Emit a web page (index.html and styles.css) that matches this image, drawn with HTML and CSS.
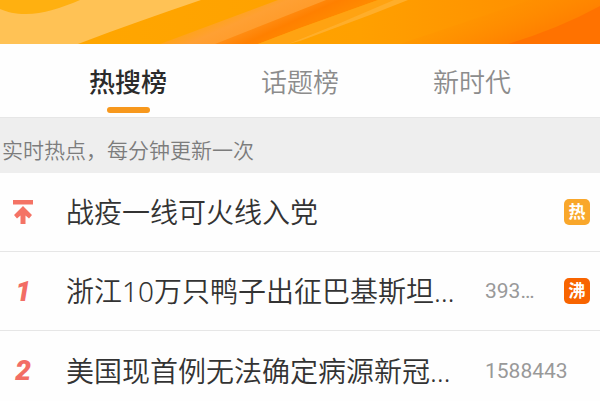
FILE: index.html
```html
<!DOCTYPE html>
<html lang="zh-CN">

<head>
    <meta charset="UTF-8">
    <meta name="viewport" content="width=device-width, initial-scale=1.0">
    <title>热搜榜</title>
    <link rel="stylesheet" href="styles.css">
</head>

<body>
    <header class="banner">
        <svg class="banner-art" viewBox="0 0 600 44" preserveAspectRatio="none" aria-hidden="true">
            <defs>
                <linearGradient id="base" x1="0" y1="0" x2="1" y2="0">
                    <stop offset="0" stop-color="#ffa800" />
                    <stop offset="0.6" stop-color="#ffa000" />
                    <stop offset="1" stop-color="#ff8a00" />
                </linearGradient>
                <linearGradient id="stripe" gradientUnits="userSpaceOnUse" x1="222" y1="14" x2="236" y2="46">
                    <stop offset="0" stop-color="#ffa414" />
                    <stop offset="0.4" stop-color="#ffa033" />
                    <stop offset="1" stop-color="#ff9a28" />
                </linearGradient>
                <linearGradient id="deep" gradientUnits="userSpaceOnUse" x1="262" y1="20" x2="274" y2="46">
                    <stop offset="0" stop-color="#ff9018" />
                    <stop offset="0.5" stop-color="#ff8000" />
                    <stop offset="1" stop-color="#ff8a00" />
                </linearGradient>
                <linearGradient id="shade" gradientUnits="userSpaceOnUse" x1="470" y1="0" x2="490" y2="50">
                    <stop offset="0" stop-color="#ff9600" stop-opacity="0" />
                    <stop offset="1" stop-color="#ff8200" />
                </linearGradient>
            </defs>
            <rect width="600" height="44" fill="url(#base)" />
            <path d="M0 0H201C160 14 120 28 78 44H0Z" fill="#ffc255" />
            <path d="M0 0H80C61 8 43 14 26 14C15 14 7 12 0 9Z" fill="#ffb010" />
            <path d="M278 0H345L235 44H160Z" fill="url(#stripe)" />
            <path d="M326 0H378L300 28L258 44H215Z" fill="url(#deep)" />
            <path d="M378 0H398L300 39L288 44H258L300 28Z" fill="#ffa312" />
            <path d="M394 0H408L370 15L300 41L288 44L340 23Z" fill="#ffae2a" />
            <path d="M530 0H600V44H400Z" fill="url(#shade)" />
            <path d="M600 6V44H508Q560 28 600 6Z" fill="#ff7200" />
        </svg>
    </header>

    <nav class="tabs">
        <button type="button" class="tab active">热搜榜</button>
        <button type="button" class="tab">话题榜</button>
        <button type="button" class="tab">新时代</button>
    </nav>

    <main>
        <p class="notice">实时热点，每分钟更新一次</p>

        <ul class="list">
            <li class="item">
                <span class="rank">
                    <svg width="20" height="24" viewBox="0 0 20 24" role="img" aria-label="置顶">
                        <path d="M0 0H20V4.500H0Z" />
                        <path d="M10 6L19 15L16 18.500L12.500 15.500V24H7.500V15.500L4 18.500L1 15Z" />
                    </svg>
                </span>
                <a class="title" href="#">战疫一线可火线入党</a>
                <span class="meta">
                    <span class="badge hot">热</span>
                </span>
            </li>
            <li class="item">
                <span class="rank">1</span>
                <a class="title" href="#">浙江10万只鸭子出征巴基斯坦…</a>
                <span class="meta">
                    <span class="count">393…</span>
                    <span class="badge boil">沸</span>
                </span>
            </li>
            <li class="item">
                <span class="rank">2</span>
                <a class="title" href="#">美国现首例无法确定病源新冠…</a>
                <span class="meta">
                    <span class="count">1588443</span>
                </span>
            </li>
        </ul>
    </main>
</body>

</html>
```

FILE: styles.css
```css
* {
    margin: 0;
    padding: 0;
    box-sizing: border-box;
}

body {
    background-color: #fefefe;
    color: #333333;
    font-family: Roboto, "Noto Sans CJK SC", sans-serif;
    font-weight: 350;
}

.banner-art {
    display: block;
    width: 100%;
    height: 44px;
}

.tabs {
    display: grid;
    grid-template-columns: repeat(3, 1fr);
    padding: 0 7%;
}

.tab {
    display: flex;
    flex-direction: column;
    align-items: center;
    gap: 4px;
    padding: 19px 0 4px;
    border: none;
    background: none;
    color: #8c8c8c;
    font-family: inherit;
    font-size: 26px;
    font-weight: 350;
    line-height: 40px;
    cursor: pointer;
}

.tab::after {
    content: "";
    width: 43px;
    height: 6px;
    border-radius: 3px;
}

.tab.active {
    color: #2b2b2b;
    font-weight: 500;
}

.tab.active::after {
    background-color: #f7981d;
}

.notice {
    padding: 18px 2px 7px;
    border-top: 1px solid #e6e6e6;
    background-color: #eeeeee;
    color: #7c7c7c;
    font-size: 21px;
    line-height: 30px;
}

.list {
    list-style: none;
}

.item {
    display: flex;
    align-items: center;
    height: 79px;
    padding-right: 10px;
    border-bottom: 1px solid #e6e6e6;
}

.item:last-child {
    border-bottom: none;
}

.rank {
    display: flex;
    justify-content: center;
    width: 46px;
    margin-right: 20px;
    color: #f26d65;
    font-size: 28px;
    font-style: italic;
    font-weight: 900;
}

.rank svg {
    fill: #f47365;
}

.title {
    flex: 1;
    overflow: hidden;
    color: #333333;
    font-family: "Noto Sans", "Noto Sans CJK SC", sans-serif;
    font-size: 28px;
    line-height: 42px;
    text-decoration: none;
    text-overflow: ellipsis;
    white-space: nowrap;
}

.meta {
    display: flex;
    align-items: center;
    width: 105px;
}

.count {
    color: #999999;
    font-size: 21px;
    font-weight: 400;
}

.badge {
    width: 26px;
    height: 26px;
    margin-left: auto;
    border-radius: 5px;
    color: #ffffff;
    font-size: 17px;
    font-weight: 700;
    line-height: 26px;
    text-align: center;
}

.badge.hot {
    background-color: #f9a72b;
}

.badge.boil {
    background-color: #f86400;
}
```
